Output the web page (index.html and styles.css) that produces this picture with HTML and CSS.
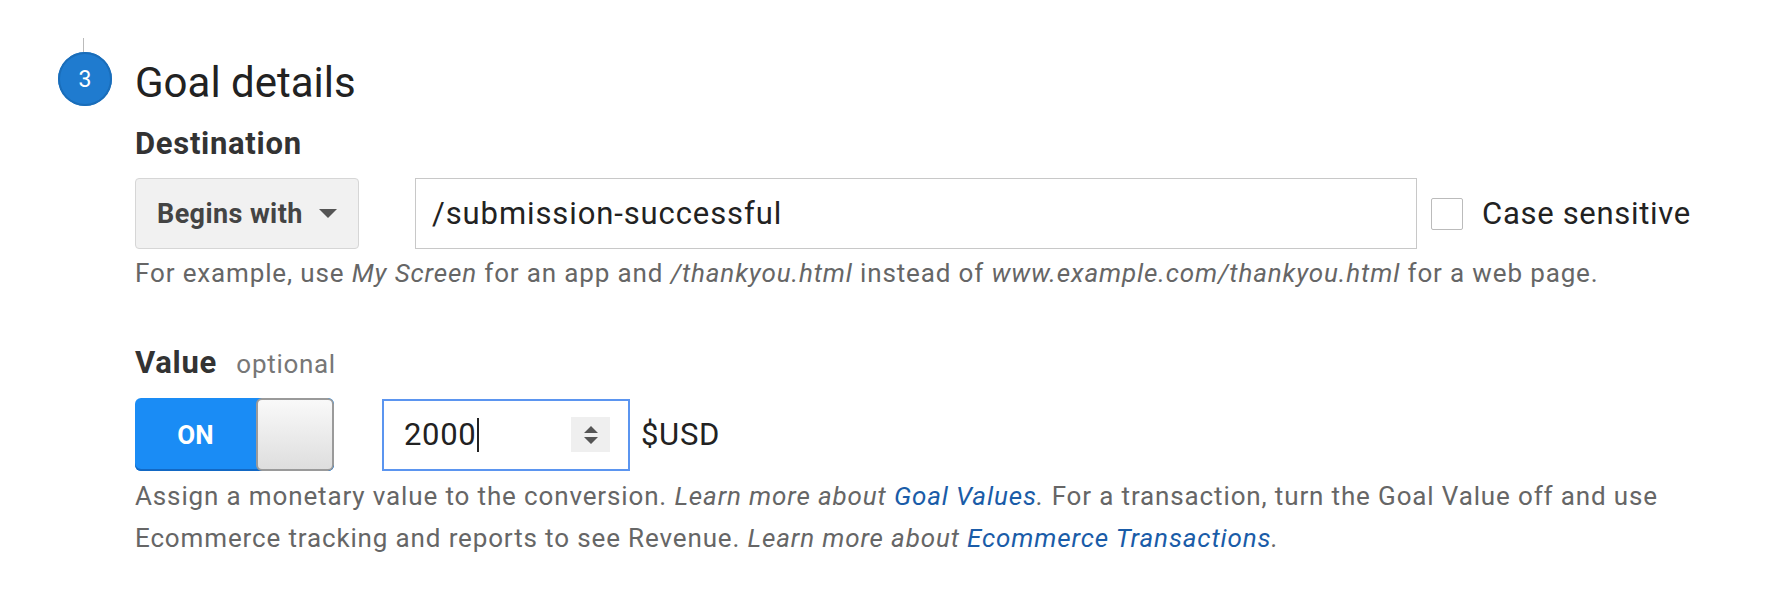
FILE: index.html
```html
<!DOCTYPE html>
<html lang="en">
<head>
  <meta charset="UTF-8" />
  <title>Goal details</title>
  <link rel="stylesheet" href="styles.css">
</head>
<body>

  <div class="step">
    <div class="step-marker">
      <span class="step-line"></span>
      <span class="step-num">3</span>
    </div>

    <div class="step-body">
      <h2>Goal details</h2>

      <h3>Destination</h3>
      <div class="row">
        <button class="select-btn">Begins with <span class="caret"></span></button>
        <input type="text" class="text-input" value="/submission-successful">
        <label class="check">
          <span class="box"></span>
          Case sensitive
        </label>
      </div>
      <p class="hint">For example, use <i>My Screen</i> for an app and <i>/thankyou.html</i> instead of <i>www.example.com/thankyou.html</i> for a web page.</p>

      <h3 class="value-title">Value <span class="optional">optional</span></h3>
      <div class="row">
        <div class="toggle">
          <span class="toggle-on">ON</span>
          <span class="toggle-knob"></span>
        </div>
        <div class="num-input">
          <span class="num-text">2000<span class="cursor"></span></span>
          <span class="spinner">
            <svg width="18" height="22" viewBox="0 0 18 22"><path d="M9 2 L16 9 H2 Z M9 20 L16 13 H2 Z" fill="#555"/></svg>
          </span>
        </div>
        <span class="unit">$USD</span>
      </div>
      <p class="hint desc">Assign a monetary value to the conversion. <i>Learn more about <a href="#">Goal Values</a>.</i> For a transaction, turn the Goal Value off and use Ecommerce tracking and reports to see Revenue. <i>Learn more about <a href="#">Ecommerce Transactions</a>.</i></p>
    </div>
  </div>

</body>
</html>
```

FILE: styles.css
```css
body {
  margin: 0;
  font-family: Roboto, "Liberation Sans", Arial, sans-serif;
  background: #fff;
  color: #222;
}
.step {
  display: flex;
  gap: 23px;
  padding: 38px 0 0 58px;
}
.step-marker {
  display: flex;
  flex-direction: column;
  align-items: center;
  width: 54px;
}
.step-line {
  width: 1px;
  height: 14px;
  background: #bbb;
  margin-right: 4px;
}
.step-num {
  width: 54px;
  height: 54px;
  border-radius: 50%;
  background: #1f7bcf;
  box-shadow: inset 0 0 0 2px #1a6db9;
  color: #fff;
  font-size: 23px;
  display: flex;
  align-items: center;
  justify-content: center;
}
h2 {
  font-size: 42px;
  font-weight: 400;
  line-height: 50px;
  margin: 20px 0 18px 0;
  color: #222;
}
h3 {
  font-size: 31px;
  font-weight: 700;
  line-height: 36px;
  letter-spacing: 0.7px;
  margin: 0 0 16px 0;
  color: #333;
}
.value-title {
  margin-top: 51px;
}
.optional {
  font-size: 26px;
  font-weight: 400;
  color: #777;
  margin-left: 11px;
}
.row {
  display: flex;
  align-items: center;
}
.select-btn {
  height: 71px;
  width: 224px;
  padding: 0 21px 0 21px;
  display: flex;
  align-items: center;
  justify-content: space-between;
  background: #f1f1f1;
  border: 1px solid #d6d6d6;
  border-radius: 4px;
  font-family: inherit;
  font-size: 27px;
  font-weight: 700;
  letter-spacing: 0.4px;
  color: #444;
}
.caret {
  width: 0;
  height: 0;
  border-left: 9px solid transparent;
  border-right: 9px solid transparent;
  border-top: 9px solid #555;
}
.text-input {
  margin-left: 56px;
  width: 1002px;
  height: 71px;
  box-sizing: border-box;
  padding: 0 16px;
  border: 1px solid #c8c8c8;
  font-family: inherit;
  font-size: 31px;
  letter-spacing: 0.9px;
  color: #222;
  outline: none;
}
.check {
  display: flex;
  align-items: center;
  gap: 19px;
  margin-left: 14px;
  font-size: 31px;
  letter-spacing: 0.7px;
  color: #222;
}
.box {
  width: 30px;
  height: 30px;
  border: 1px solid #bbb;
  border-radius: 2px;
}
.hint {
  font-size: 26px;
  line-height: 42px;
  letter-spacing: 0.86px;
  color: #666;
  margin: 3px 0 0 0;
}
.desc {
  margin-top: 4px;
  max-width: 1560px;
}
.hint a {
  color: #1a5ca8;
  text-decoration: none;
}
.toggle {
  display: flex;
  width: 199px;
  height: 73px;
  border-radius: 6px;
  overflow: hidden;
  background: #1a8cf5;
  box-shadow: inset 0 -2px 0 #1268c4;
}
.toggle-on {
  width: 121px;
  display: flex;
  align-items: center;
  justify-content: center;
  color: #fff;
  font-weight: 700;
  font-size: 26px;
}
.toggle-knob {
  flex: 1;
  border: 2px solid #9a9a9a;
  border-radius: 6px;
  background: linear-gradient(#f9f9f9, #dedede);
}
.num-input {
  margin-left: 48px;
  width: 248px;
  height: 72px;
  box-sizing: border-box;
  border: 2px solid #5b95f0;
  display: flex;
  align-items: center;
  justify-content: space-between;
  padding: 0 18px 0 20px;
}
.num-text {
  font-size: 31px;
  letter-spacing: 0.7px;
  color: #222;
  display: flex;
  align-items: center;
}
.cursor {
  width: 2px;
  height: 34px;
  background: #222;
}
.spinner {
  width: 39px;
  height: 35px;
  background: #efefef;
  display: flex;
  align-items: center;
  justify-content: center;
}
.unit {
  margin-left: 11px;
  font-size: 31px;
  letter-spacing: 0.7px;
  color: #222;
}
```
